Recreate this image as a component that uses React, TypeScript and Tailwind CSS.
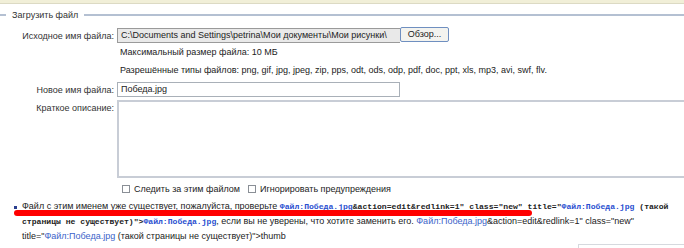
const mono = "font-['Liberation_Mono',monospace] font-bold text-[8.1px]";
const link = 'text-[#2a4fd0]';

const App = () => {
  return (
    <div className="relative w-[684px] h-[248px] overflow-hidden bg-white text-[9px] leading-[14px] text-[#222] font-['Liberation_Sans',Arial,sans-serif]">
      <div className="h-[4px] bg-[#f1efd8] border-b border-[#dcdac4]"></div>

      {/* fieldset legend */}
      <div className="mt-[3px] h-[16px] flex items-center">
        <div className="w-[6px] h-[2px] bg-[#b4c0d2]"></div>
        <span className="px-[6px] text-[#333]">Загрузить файл</span>
        <div className="flex-1 h-[2px] bg-[#b4c0d2]"></div>
      </div>

      <div className="mt-[4px] flex items-start h-[16px]">
        <div className="w-[117px] pr-[3px] pt-[2px] text-right text-[#333]">Исходное имя файла:</div>
        <div className="mt-px w-[283px] h-[15px] bg-[#e9e9e9] border border-[#9a9a9a] border-r-0 pl-[3px] overflow-hidden whitespace-nowrap leading-[13px]">
          C:\Documents and Settings\petrina\Мои документы\Мои рисунки\
        </div>
        <div className="w-[49px] h-[15px] bg-[#f3f3ef] border border-[#6f8fc0] rounded-[2px] text-center leading-[13px] text-[#222]">
          Обзор...
        </div>
      </div>

      <div className="pl-[120px] h-[18px] leading-[18px]">Максимальный размер файла: 10 МБ</div>
      <div className="pl-[120px] h-[19px] leading-[19px]">
        Разрешённые типы файлов: png, gif, jpg, jpeg, zip, pps, odt, ods, odp, pdf, doc, ppt, xls, mp3, avi, swf, flv.
      </div>

      <div className="mt-[2px] flex items-center">
        <div className="w-[117px] pr-[3px] text-right text-[#333]">Новое имя файла:</div>
        <div className="w-[283px] h-[15px] border border-[#a9b0b8] pl-[3px] leading-[13px]">Победа.jpg</div>
      </div>

      <div className="mt-[3px] flex items-start">
        <div className="w-[117px] pr-[3px] pt-[1px] text-right text-[#333]">Краткое описание:</div>
        <div className="flex-1 h-[78px] border-y-2 border-l-2 border-[#c8cdd6]"></div>
      </div>

      <div className="mt-[4px] pl-[122px] flex items-center gap-[4px] h-[14px]">
        <span className="w-[8px] h-[8px] border border-[#8a8f96] bg-white"></span>
        <span className="mr-[4px]">Следить за этим файлом</span>
        <span className="w-[8px] h-[8px] border border-[#8a8f96] bg-white"></span>
        <span>Игнорировать предупреждения</span>
      </div>

      <div className="mt-[3px] flex items-start">
        <div className="w-[22px] pl-[14px] pt-[7px]">
          <div className="w-[3px] h-[3px] bg-[#2a3f8f]"></div>
        </div>
        <div className="flex-1 leading-[15px] whitespace-nowrap">
          <div>
            <span className="underline decoration-[#444]">
              Файл с этим именем уже существует, пожалуйста, проверьте{' '}
              <span className={mono}>
                <span className={link}>Файл:Победа.jpg</span>&amp;action=edit&amp;redlink=1" class="new"
              </span>
            </span>
            <span className={mono}>
              {' '}title="<span className={link}>Файл:Победа.jpg</span> (такой
            </span>
          </div>
          <div>
            <span className={mono}>
              страницы не существует)"&gt;<span className={link}>Файл:Победа.jpg</span>
            </span>
            , если вы не уверены, что хотите заменить его. <span className="text-[#3b63c9]">Файл:Победа.jpg</span>
            &amp;action=edit&amp;redlink=1" class="new"
          </div>
          <div>
            title="<span className="text-[#3b63c9]">Файл:Победа.jpg</span> (такой страницы не существует)"&gt;thumb
          </div>
        </div>
      </div>

      <div className="flex justify-end">
        <div className="w-[106px] h-[8px] border-t border-l border-[#d6d9de]"></div>
      </div>

      {/* red marker annotation */}
      <div className="absolute left-[14px] top-[210px] w-[518px] h-[6px] bg-[#ff0000] rounded-full"></div>
    </div>
  );
};

export default App;
